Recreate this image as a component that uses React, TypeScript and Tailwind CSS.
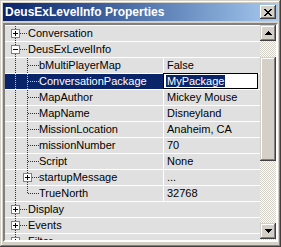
import React from 'react';

type Row = {
  label: string;
  value?: string;
  kind: 'cat' | 'child';
  expanded?: boolean;
  box?: boolean;
  last?: boolean;
  selected?: boolean;
  edit?: boolean;
};

const rows: Row[] = [
  { label: 'Conversation', kind: 'cat' },
  { label: 'DeusExLevelInfo', kind: 'cat', expanded: true },
  { label: 'bMultiPlayerMap', value: 'False', kind: 'child' },
  { label: 'ConversationPackage', value: 'MyPackage', kind: 'child', selected: true, edit: true },
  { label: 'MapAuthor', value: 'Mickey Mouse', kind: 'child' },
  { label: 'MapName', value: 'Disneyland', kind: 'child' },
  { label: 'MissionLocation', value: 'Anaheim, CA', kind: 'child' },
  { label: 'missionNumber', value: '70', kind: 'child' },
  { label: 'Script', value: 'None', kind: 'child' },
  { label: 'startupMessage', value: '...', kind: 'child', box: true },
  { label: 'TrueNorth', value: '32768', kind: 'child', last: true },
  { label: 'Display', kind: 'cat' },
  { label: 'Events', kind: 'cat' },
  { label: 'Filter', kind: 'cat' },
];

// small +/- box used by the tree
function ExpandBox({ x, open, line }: { x: number; open?: boolean; line: string }) {
  return (
    <g shapeRendering="crispEdges">
      <rect x={x + 0.5} y={3.5} width={8} height={8} fill="#ffffff" stroke="#808080" />
      <line x1={x + 2} y1={7.5} x2={x + 7} y2={7.5} stroke="#000" />
      {!open && <line x1={x + 4.5} y1={5} x2={x + 4.5} y2={10} stroke="#000" />}
      <line x1={x + 9} y1={7.5} x2={x + 17} y2={7.5} stroke={line} strokeDasharray="1 1" />
    </g>
  );
}

function TreeLines({ row }: { row: Row }) {
  const c = row.selected ? '#c0c0ff' : '#303030';
  if (row.kind === 'cat') {
    return (
      <svg width="23" height="15" className="shrink-0">
        <line x1={10.5} y1={0} x2={10.5} y2={15} stroke="#303030" strokeDasharray="1 1" shapeRendering="crispEdges" />
        <ExpandBox x={6} open={row.expanded} line="#303030" />
      </svg>
    );
  }
  return (
    <svg width="34" height="15" className="shrink-0">
      <g shapeRendering="crispEdges" strokeDasharray="1 1">
        <line x1={10.5} y1={0} x2={10.5} y2={15} stroke={c} />
        <line x1={22.5} y1={0} x2={22.5} y2={row.last ? 8 : 15} stroke={c} />
        {!row.box && <line x1={23} y1={7.5} x2={34} y2={7.5} stroke={c} />}
      </g>
      {row.box && <ExpandBox x={18} line={c} />}
    </svg>
  );
}

function PropRow({ row }: { row: Row }) {
  const isCat = row.kind === 'cat';
  return (
    <div className="flex h-[16px] shrink-0 border-b border-white bg-[#e0e0e0]">
      <div
        className={
          'flex w-[158px] shrink-0 items-center ' +
          (row.selected ? 'bg-[#0a246a] text-white' : 'text-black')
        }
      >
        <TreeLines row={row} />
        <span className="whitespace-nowrap leading-[15px]">{row.label}</span>
      </div>
      {!isCat && (
        <div className="flex w-[95px] shrink-0 items-stretch border-l border-white">
          {row.edit ? (
            <div className="-mt-px -ml-px flex h-[16px] w-[95px] items-center border border-black bg-white pl-[2px]">
              <span className="bg-[#0a246a] px-px leading-[12px] text-white">{row.value}</span>
            </div>
          ) : (
            <span className="whitespace-nowrap pl-[3px] leading-[15px] text-black">{row.value}</span>
          )}
        </div>
      )}
    </div>
  );
}

function ArrowButton({ down }: { down?: boolean }) {
  return (
    <div className="flex h-[16px] w-[16px] shrink-0 items-center justify-center bg-[#d4d0c8] shadow-[inset_-1px_-1px_#404040,inset_1px_1px_#d4d0c8,inset_-2px_-2px_#808080,inset_2px_2px_#ffffff]">
      <svg width="7" height="4" viewBox="0 0 7 4" shapeRendering="crispEdges">
        {down ? <path d="M0 0h7L3.5 4z" fill="#000" /> : <path d="M3.5 0L7 4H0z" fill="#000" />}
      </svg>
    </div>
  );
}

export default function App() {
  return (
    <div
      className="flex h-[247px] w-[281px] flex-col bg-[#d4d0c8] px-[3px] pt-[3px] pb-[5px] text-[11px] shadow-[inset_-1px_-1px_#404040,inset_1px_1px_#d4d0c8,inset_-2px_-2px_#808080,inset_2px_2px_#ffffff]"
      style={{ fontFamily: '"Liberation Sans", Arial, sans-serif' }}
    >
      {/* title bar */}
      <div className="flex h-[18px] shrink-0 items-center justify-between bg-gradient-to-r from-[#0a246a] to-[#a6caf0] pl-[2px] pr-[2px]">
        <span className="text-[12px] font-bold whitespace-nowrap text-white">DeusExLevelInfo Properties</span>
        <div className="flex h-[14px] w-[16px] items-center justify-center bg-[#d4d0c8] shadow-[inset_-1px_-1px_#404040,inset_1px_1px_#ffffff,inset_-2px_-2px_#808080]">
          <svg width="8" height="7" viewBox="0 0 8 7" shapeRendering="crispEdges">
            <path d="M0 0h2v1h1v1h2V1h1V0h2v1H7v1H6v1H5v1h1v1h1v1h1v1H6V6H5V5H3v1H2v1H0V6h1V5h1V4h1V3H2V2H1V1H0z" fill="#000" />
          </svg>
        </div>
      </div>

      {/* property panel */}
      <div className="mt-[2px] flex min-h-0 flex-1 border-2 border-t-[#808080] border-l-[#808080] border-r-white border-b-white">
        <div className="flex min-h-0 flex-1 overflow-hidden shadow-[inset_1px_1px_#404040]">
          <div className="flex min-h-0 flex-1 flex-col overflow-hidden border-t border-white">
            {rows.map((r) => (
              <PropRow key={r.label} row={r} />
            ))}
          </div>
          {/* scrollbar */}
          <div className="flex w-[16px] shrink-0 flex-col bg-[repeating-conic-gradient(#d4d0c8_0_25%,#ffffff_0_50%)] bg-[length:2px_2px]">
            <ArrowButton />
            <div className="h-[16px] shrink-0" />
            <div className="h-[104px] shrink-0 bg-[#d4d0c8] shadow-[inset_-1px_-1px_#404040,inset_1px_1px_#d4d0c8,inset_-2px_-2px_#808080,inset_2px_2px_#ffffff]" />
            <div className="flex-1" />
            <ArrowButton down />
            <div className="h-[1px] shrink-0" />
          </div>
        </div>
      </div>
    </div>
  );
}
